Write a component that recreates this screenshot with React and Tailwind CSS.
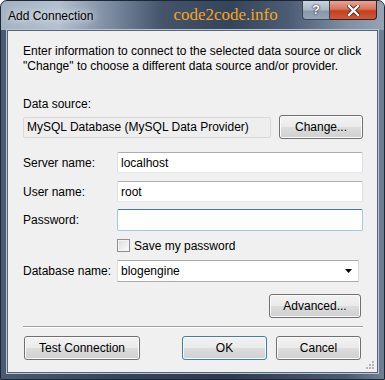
import React from "react";

const font = { fontFamily: '"Liberation Sans", Arial, sans-serif' };

function WinButton({ children, className = "", primary = false }) {
  return (
    <button
      className={`h-[24px] rounded-[3px] border text-[12px] text-black bg-[linear-gradient(to_bottom,#f2f2f2_0%,#ebebeb_48%,#dddddd_52%,#cfcfcf_100%)] shadow-[inset_0_0_0_1px_#fcfcfc] ${
        primary
          ? "border-[#3c7fb1] shadow-[inset_0_0_0_1px_#aee4f7] bg-[linear-gradient(to_bottom,#f0f6fa_0%,#e4eff6_48%,#d3e2ec_52%,#c6d8e4_100%)]"
          : "border-[#707070]"
      } ${className}`}
    >
      {children}
    </button>
  );
}

function TextBox({ value, focused = false, className = "" }) {
  return (
    <div
      className={`h-[21px] flex items-center px-[3px] bg-white rounded-[2px] border text-[12px] ${
        focused
          ? "border-[#a4c9e3] border-t-[#3d7bad]"
          : "border-[#dbdfe6] border-t-[#abadb3] border-b-[#e3e9ef]"
      } ${className}`}
    >
      {value}
    </div>
  );
}

function Row({ label, children, className = "" }) {
  return (
    <div className={`flex items-center ${className}`}>
      <div className="w-[94px] shrink-0 text-[12px]">{label}</div>
      {children}
    </div>
  );
}

export default function App() {
  return (
    <div className="w-[385px] h-[380px] bg-white" style={font}>
      <div className="w-[385px] h-[380px] flex flex-col rounded-t-[7px] overflow-hidden border border-[#1c2634] bg-[linear-gradient(to_right,#4a5a70_0%,#34445a_30%,#2c3b50_60%,#4a5a70_90%,#6f7f94_100%)]">
        {/* title bar */}
        <div className="h-[29px] shrink-0 flex items-start relative bg-[linear-gradient(to_right,#a3b1c1_0%,#b4c0ce_15%,#7d8da2_28%,#44546b_42%,#34445a_60%,#4c5c74_75%,#7e8ea3_90%,#95a3b5_100%)]">
          <div className="pl-[7px] pt-[6px] text-[12px] text-black [text-shadow:0_0_6px_#dfe7ef,0_0_10px_#dfe7ef]">
            Add Connection
          </div>
          <div
            className="ml-[80px] pt-[4px] text-[17px] text-[#f4a51c] leading-[20px]"
            style={{ fontFamily: '"Liberation Serif", "Times New Roman", serif' }}
          >
            code2code.info
          </div>
          <div className="ml-auto mr-[7px] flex">
            <div className="w-[28px] h-[19px] flex items-center justify-center rounded-bl-[4px] border border-t-0 border-[#3a4658] bg-[linear-gradient(to_bottom,#c9d3de_0%,#a9b6c5_50%,#8897a9_55%,#95a4b5_100%)] text-white font-bold text-[13px] [text-shadow:0_0_2px_#223,0_0_1px_#223]">
              ?
            </div>
            <div className="w-[47px] h-[19px] flex items-center justify-center rounded-br-[4px] border border-t-0 border-l-0 border-[#3a2020] bg-[linear-gradient(to_bottom,#e8a593_0%,#d8735c_45%,#c2401f_55%,#d0583a_100%)]">
              <svg width="13" height="11" viewBox="0 0 13 11">
                <path
                  d="M2 1 L11 10 M11 1 L2 10"
                  stroke="#4a2018"
                  strokeWidth="4"
                  strokeLinecap="square"
                />
                <path
                  d="M2 1 L11 10 M11 1 L2 10"
                  stroke="#ffffff"
                  strokeWidth="2.4"
                  strokeLinecap="square"
                />
              </svg>
            </div>
          </div>
        </div>

        {/* client area */}
        <div className="relative flex-1 mx-[6px] mb-[6px] border border-[#56667a] bg-[#f0f0f0] shadow-[0_0_0_1px_#b9c4d0] text-black pl-[15px] pr-[14px] pt-[13px]">
          <p className="text-[12px] leading-[15px]">
            Enter information to connect to the selected data source or click "Change" to choose a different data source and/or provider.
          </p>

          <div className="mt-[23px] text-[12px] leading-[15px]">Data source:</div>
          <div className="mt-[3px] flex items-center">
            <div className="w-[248px] h-[21px] flex items-center px-[3px] bg-[#eeeeee] border border-[#d9d9d9] rounded-[2px] text-[12px]">
              MySQL Database (MySQL Data Provider)
            </div>
            <WinButton className="ml-auto w-[84px]">Change...</WinButton>
          </div>

          <Row label="Server name:" className="mt-[13px]">
            <TextBox value="localhost" className="flex-1" />
          </Row>
          <Row label="User name:" className="mt-[8px]">
            <TextBox value="root" className="flex-1" />
          </Row>
          <Row label="Password:" className="mt-[7px]">
            <TextBox value="" focused className="flex-1 h-[22px]" />
          </Row>

          <div className="mt-[8px] pl-[94px] flex items-center h-[13px]">
            <div className="w-[13px] h-[13px] border border-[#8e8f8f] bg-[linear-gradient(135deg,#dcdcdc,#fbfbfb)] shadow-[inset_0_0_0_1px_#f4f4f4]" />
            <span className="ml-[4px] text-[12px]">Save my password</span>
          </div>

          <Row label="Database name:" className="mt-[8px]">
            <div className="w-[242px] h-[22px] flex items-center pl-[3px] pr-[6px] bg-white border border-[#acacac] border-l-[#e0e0e0] border-r-[#dcdcdc] text-[12px]">
              <span>blogengine</span>
              <svg className="ml-auto" width="7" height="4" viewBox="0 0 7 4">
                <path d="M0 0 H7 L3.5 4 Z" fill="#000" />
              </svg>
            </div>
          </Row>

          <div className="mt-[12px] flex justify-end">
            <WinButton className="w-[92px] mr-[2px]">Advanced...</WinButton>
          </div>

          <div className="mt-[8px] h-[2px] border-t border-[#a0a0a0] border-b border-b-white" />

          <div className="mt-[8px] flex items-center">
            <WinButton className="w-[116px] ml-[1px]">Test Connection</WinButton>
            <WinButton primary className="w-[85px] ml-auto">OK</WinButton>
            <WinButton className="w-[85px] ml-[9px] mr-[2px]">Cancel</WinButton>
          </div>

          <svg className="absolute right-[2px] bottom-[2px]" width="10" height="10" viewBox="0 0 10 10">
            <g fill="#b5b5b5">
              <rect x="7" y="1" width="2" height="2" />
              <rect x="4" y="4" width="2" height="2" />
              <rect x="7" y="4" width="2" height="2" />
              <rect x="1" y="7" width="2" height="2" />
              <rect x="4" y="7" width="2" height="2" />
              <rect x="7" y="7" width="2" height="2" />
            </g>
          </svg>
        </div>
      </div>
    </div>
  );
}
